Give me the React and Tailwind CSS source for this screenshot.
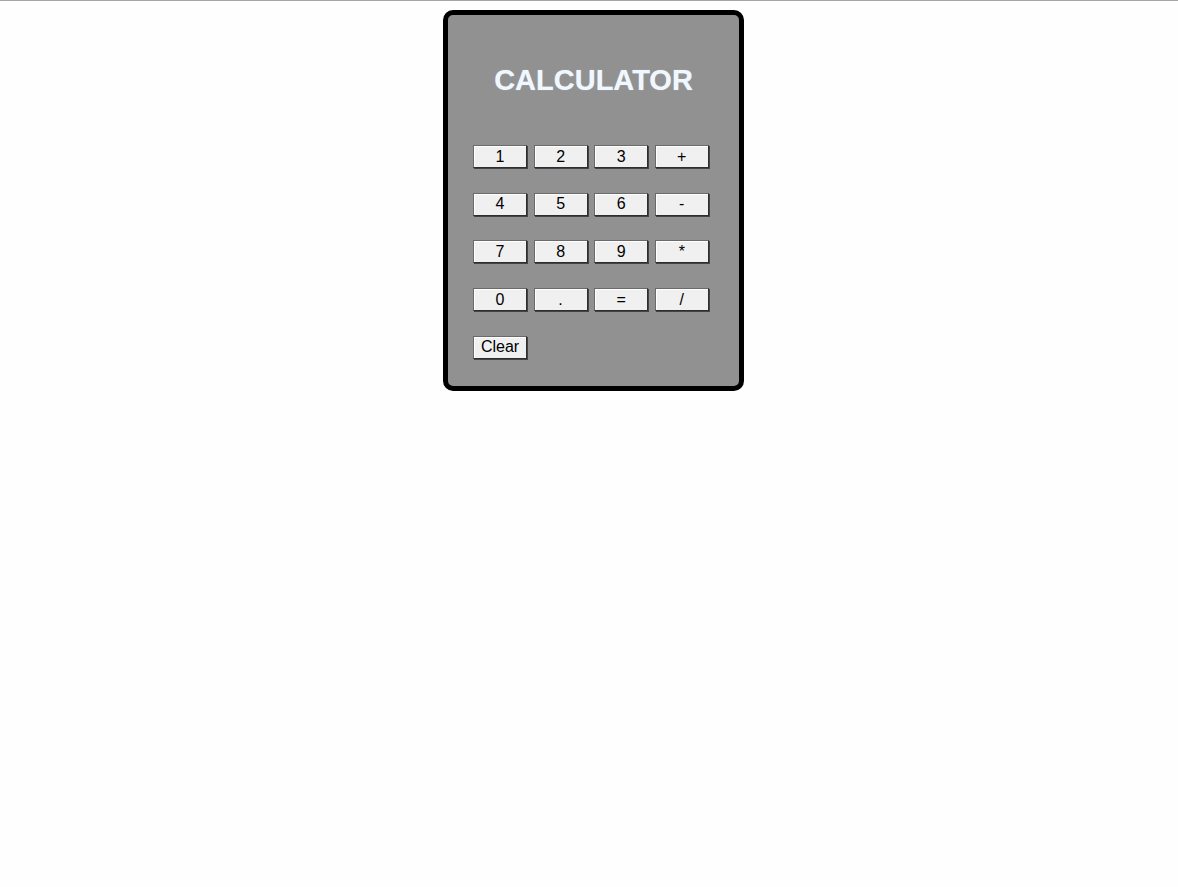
import React from "react";

const rows = [
  ["1", "2", "3", "+"],
  ["4", "5", "6", "-"],
  ["7", "8", "9", "*"],
  ["0", ".", "=", "/"],
];

function Btn({ children, w = "w-[54px]" }) {
  return (
    <button
      className={`${w} h-[23px] bg-[#f0f0f0] text-black text-[16px] leading-none border border-t-[#6a6a6a] border-l-[#6a6a6a] border-r-[#2e2e2e] border-b-[#2e2e2e] shadow-[1px_1px_0_#444,inset_1px_1px_0_#ffffff] flex items-center justify-center`}
      style={{ fontFamily: '"Liberation Sans", Arial, sans-serif' }}
    >
      {children}
    </button>
  );
}

export default function App() {
  return (
    <div
      className="min-h-[887px] bg-[#fefefe] border-t border-[#a6a6a6] pt-[9px]"
      style={{ fontFamily: '"Liberation Sans", Arial, sans-serif' }}
    >
      <div className="ml-[443px] w-[301px] h-[381px] bg-[#919191] border-[5px] border-black rounded-[10px] pt-[50px] pl-[25px]">
        <h1 className="text-[29px] font-bold text-[#f0f8ff] text-center pr-[25px] leading-[30px] mb-[50px] [text-shadow:0_0_1px_rgba(255,255,255,0.5)]">
          CALCULATOR
        </h1>
        <div className="flex flex-col gap-[24.7px]">
          {rows.map((r, i) => (
            <div key={i} className="flex gap-[6.6px]">
              {r.map((k) => (
                <Btn key={k}>{k}</Btn>
              ))}
            </div>
          ))}
          <div className="flex">
            <Btn w="w-[54px]">Clear</Btn>
          </div>
        </div>
      </div>
    </div>
  );
}
